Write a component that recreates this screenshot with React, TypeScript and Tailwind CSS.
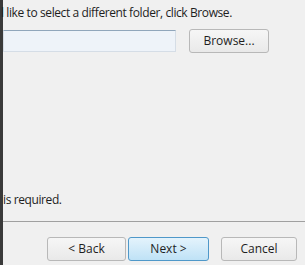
const btn =
  "h-[24px] rounded-[3px] border text-[12px] leading-none flex items-center justify-center";

const App = () => {
  return (
    <div
      className="w-[305px] h-[265px] bg-[#f0f0f0] flex overflow-hidden text-[#1e1e1e]"
      style={{ fontFamily: '"Open Sans", "Liberation Sans", sans-serif' }}
    >
      <div className="w-[3px] h-full bg-[#3a3a3a] shrink-0" />
      <div className="flex-1 flex flex-col">
        <p className="mt-[5px] ml-[-2px] text-[12px] leading-[16px] tracking-[-0.4px] whitespace-nowrap">
          l like to select a different folder, click Browse.
        </p>
        <div className="mt-[8px] flex items-center">
          <div className="w-[173px] h-[22px] border border-[#d5dde6] border-t-[#90a6bb] bg-[#eef3f9]" />
          <button
            className={`${btn} ml-[13px] w-[80px] border-[#b8b8b8] bg-gradient-to-b from-[#f6f6f6] to-[#e9e9e9]`}
          >
            Browse...
          </button>
        </div>
        <p className="mt-[139px] text-[12px] leading-[16px] tracking-[-0.4px]">is required.</p>
        <div className="mt-[13px] h-px bg-[#a0a0a0]" />
        <div className="mt-[15px] flex items-center">
          <button
            className={`${btn} ml-[44px] w-[79px] border-[#b8b8b8] bg-gradient-to-b from-[#f6f6f6] to-[#e9e9e9]`}
          >
            &lt; Back
          </button>
          <button
            className={`${btn} ml-[2px] w-[81px] border-[#4f98c9] bg-gradient-to-b from-[#e4f3fc] to-[#bfe2f6]`}
          >
            Next &gt;
          </button>
          <button
            className={`${btn} ml-[12px] w-[76px] border-[#b8b8b8] bg-gradient-to-b from-[#f6f6f6] to-[#e9e9e9]`}
          >
            Cancel
          </button>
        </div>
      </div>
    </div>
  );
};

export default App;
